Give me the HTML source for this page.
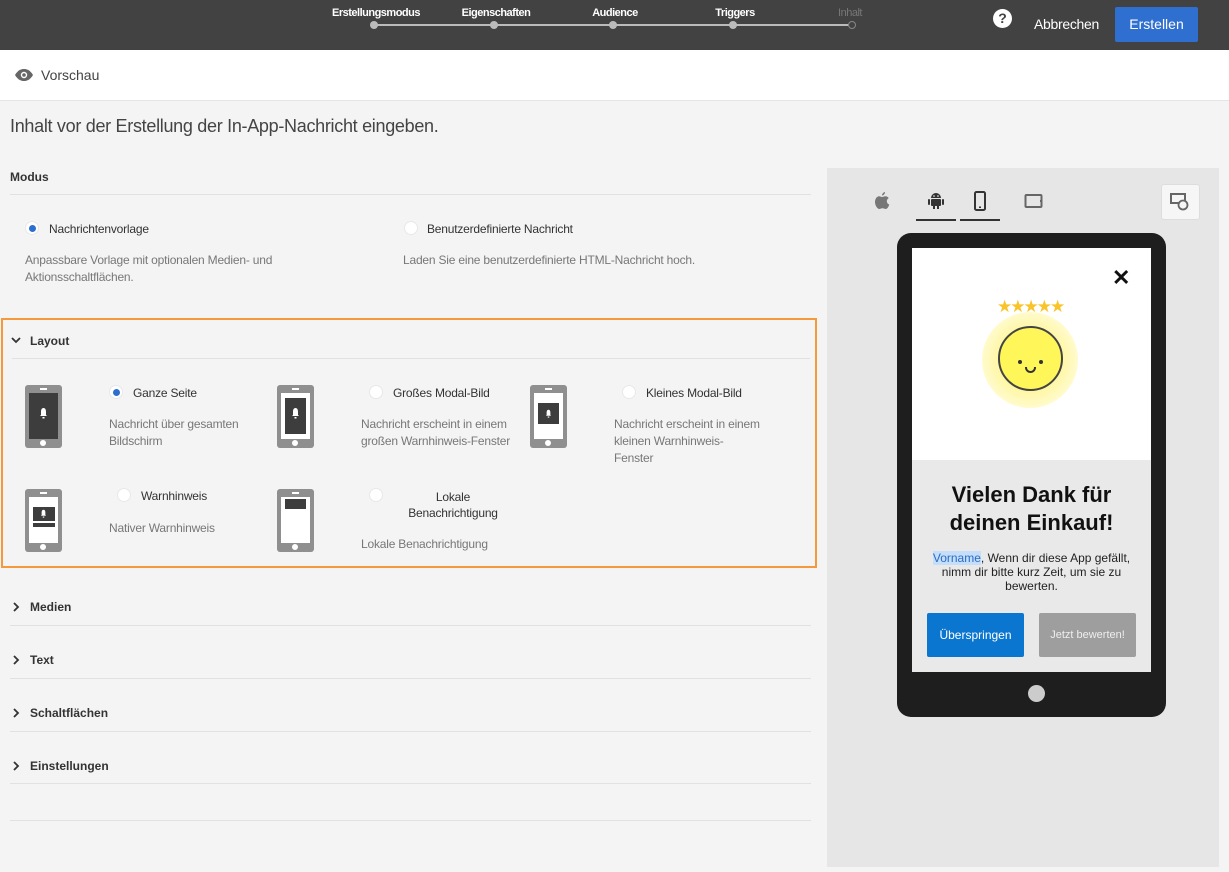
<!DOCTYPE html>
<html><head><meta charset="utf-8"><style>
*{box-sizing:border-box;margin:0;padding:0}
body{width:1229px;height:872px;background:#f4f4f4;font-family:"Liberation Sans",sans-serif;position:relative;overflow:hidden;color:#333}
.a{position:absolute}
.top{left:0;top:0;width:1229px;height:50px;background:#424242}
.step{color:#fff;font-size:11px;font-weight:bold;top:7px;transform:translateX(-50%);white-space:nowrap;letter-spacing:-0.5px}
.dot{width:8px;height:8px;border-radius:50%;background:#bbb;top:21px}
.hline{top:24px;height:2px;background:#bbb}
.sec{font-size:12px;font-weight:bold;color:#333}
.line{height:1px;background:#e1e1e1;left:10px;width:801px}
.radio{width:14px;height:14px;border-radius:50%;background:#fff;border:1px solid #e8e8e8}
.radio.on::after{content:"";position:absolute;left:3px;top:3px;width:7px;height:7px;border-radius:50%;background:#2d6fcd}
.lbl{font-size:12px;color:#333;letter-spacing:-0.2px}
.desc{font-size:12px;color:#777;line-height:17px;letter-spacing:-0.2px}
.ph{width:37px;height:63px;background:#8f8f8f;border-radius:3px}
.ph .scr{position:absolute;left:4px;top:8px;width:29px;height:46px;background:#fff}
.ph .btn{position:absolute;left:15px;bottom:2px;width:6px;height:6px;border-radius:50%;background:#fff}
.ph .sp{position:absolute;left:15px;top:3px;width:7px;height:2px;background:#fff}
.dk{position:absolute;background:#3d3d3d}
.bell{position:absolute}
</style></head><body>
<div class="a top"></div>
<div class="a hline" style="left:374px;width:478px"></div>
<div class="a step" style="left:376px">Erstellungsmodus</div>
<div class="a step" style="left:496px">Eigenschaften</div>
<div class="a step" style="left:615px">Audience</div>
<div class="a step" style="left:735px">Triggers</div>
<div class="a step" style="left:850px;color:#777;font-weight:normal">Inhalt</div>
<div class="a dot" style="left:370px"></div><div class="a dot" style="left:490px"></div><div class="a dot" style="left:609px"></div><div class="a dot" style="left:729px"></div>
<div class="a dot" style="left:848px;background:#424242;border:1px solid #888"></div>
<div class="a" style="left:993px;top:9px;width:19px;height:19px;border-radius:50%;background:#fff;color:#424242;font-size:14px;font-weight:bold;text-align:center;line-height:19px">?</div>
<div class="a" style="left:1034px;top:16px;color:#fff;font-size:14px;letter-spacing:-0.3px">Abbrechen</div>
<div class="a" style="left:1115px;top:7px;width:83px;height:35px;background:#2f6fcf;border-radius:2px;color:#fff;font-size:14px;text-align:center;line-height:35px">Erstellen</div>

<div class="a" style="left:0;top:50px;width:1229px;height:51px;background:#fff;border-bottom:1px solid #e4e4e4"></div>
<svg class="a" style="left:14px;top:68px" width="20" height="14" viewBox="0 0 20 14"><path d="M1 7C4 2 7 1 10 1s6 1 9 6c-3 5-6 6-9 6S4 12 1 7z" fill="#666"/><circle cx="10" cy="7" r="3.2" fill="#fff"/><circle cx="10" cy="7" r="1.8" fill="#666"/></svg>
<div class="a" style="left:41px;top:67px;font-size:14px;color:#444">Vorschau</div>

<div class="a" style="left:10px;top:116px;font-size:18px;color:#444;letter-spacing:-0.3px">Inhalt vor der Erstellung der In-App-Nachricht eingeben.</div>
<div class="a sec" style="left:10px;top:170px">Modus</div>
<div class="a line" style="top:194px"></div>
<div class="a radio on" style="left:25px;top:221px"></div>
<div class="a lbl" style="left:49px;top:222px">Nachrichtenvorlage</div>
<div class="a desc" style="left:25px;top:252px">Anpassbare Vorlage mit optionalen Medien- und<br>Aktionsschaltflächen.</div>
<div class="a radio" style="left:404px;top:221px"></div>
<div class="a lbl" style="left:427px;top:222px">Benutzerdefinierte Nachricht</div>
<div class="a desc" style="left:403px;top:252px">Laden Sie eine benutzerdefinierte HTML-Nachricht hoch.</div>

<div class="a" style="left:1px;top:318px;width:816px;height:250px;border:2px solid #f59a3c"></div>
<svg class="a" style="left:11px;top:336px" width="10" height="8" viewBox="0 0 10 8"><path d="M1 2l4 4 4-4" fill="none" stroke="#333" stroke-width="1.8"/></svg>
<div class="a sec" style="left:30px;top:334px">Layout</div>
<div class="a line" style="top:358px;left:12px;width:798px"></div>

<!-- phones -->
<div class="a ph" style="left:25px;top:385px"><div class="sp"></div><div class="scr" style="background:#3d3d3d"></div><svg class="bell" style="left:14px;top:22px" width="9" height="12" viewBox="0 0 9 12"><path d="M4.5 1C2.5 1 2 3 2 5v3L1 9h7L7 8V5c0-2-.5-4-2.5-4z" fill="#fff"/><rect x="3.5" y="10" width="2" height="1.5" fill="#fff"/></svg><div class="btn"></div></div>
<div class="a ph" style="left:277px;top:385px"><div class="sp"></div><div class="scr"></div><div class="dk" style="left:8px;top:13px;width:21px;height:36px"></div><svg class="bell" style="left:14px;top:22px" width="9" height="12" viewBox="0 0 9 12"><path d="M4.5 1C2.5 1 2 3 2 5v3L1 9h7L7 8V5c0-2-.5-4-2.5-4z" fill="#fff"/><rect x="3.5" y="10" width="2" height="1.5" fill="#fff"/></svg><div class="btn"></div></div>
<div class="a ph" style="left:530px;top:385px"><div class="sp"></div><div class="scr"></div><div class="dk" style="left:8px;top:18px;width:21px;height:21px"></div><svg class="bell" style="left:15px;top:24px" width="7" height="9" viewBox="0 0 9 12"><path d="M4.5 1C2.5 1 2 3 2 5v3L1 9h7L7 8V5c0-2-.5-4-2.5-4z" fill="#fff"/><rect x="3.5" y="10" width="2" height="1.5" fill="#fff"/></svg><div class="btn"></div></div>
<div class="a ph" style="left:25px;top:489px"><div class="sp"></div><div class="scr"></div><div class="dk" style="left:8px;top:18px;width:22px;height:14px"></div><div class="dk" style="left:8px;top:34px;width:22px;height:4px"></div><svg class="bell" style="left:15px;top:20px" width="7" height="9" viewBox="0 0 9 12"><path d="M4.5 1C2.5 1 2 3 2 5v3L1 9h7L7 8V5c0-2-.5-4-2.5-4z" fill="#fff"/><rect x="3.5" y="10" width="2" height="1.5" fill="#fff"/></svg><div class="btn"></div></div>
<div class="a ph" style="left:277px;top:489px"><div class="sp"></div><div class="scr"></div><div class="dk" style="left:8px;top:10px;width:21px;height:10px"></div><div class="btn"></div></div>

<div class="a radio on" style="left:109px;top:385px"></div><div class="a lbl" style="left:133px;top:386px">Ganze Seite</div>
<div class="a desc" style="left:109px;top:416px">Nachricht über gesamten<br>Bildschirm</div>
<div class="a radio" style="left:369px;top:385px"></div><div class="a lbl" style="left:393px;top:386px">Großes Modal-Bild</div>
<div class="a desc" style="left:361px;top:416px">Nachricht erscheint in einem<br>großen Warnhinweis-Fenster</div>
<div class="a radio" style="left:622px;top:385px"></div><div class="a lbl" style="left:646px;top:386px">Kleines Modal-Bild</div>
<div class="a desc" style="left:614px;top:416px">Nachricht erscheint in einem<br>kleinen Warnhinweis-<br>Fenster</div>
<div class="a radio" style="left:117px;top:488px"></div><div class="a lbl" style="left:141px;top:489px">Warnhinweis</div>
<div class="a desc" style="left:109px;top:520px">Nativer Warnhinweis</div>
<div class="a radio" style="left:369px;top:488px"></div><div class="a lbl" style="left:393px;top:489px;text-align:center;width:120px;line-height:16px">Lokale<br>Benachrichtigung</div>
<div class="a desc" style="left:361px;top:536px">Lokale Benachrichtigung</div>

<svg class="a" style="left:12px;top:602px" width="8" height="10" viewBox="0 0 8 10"><path d="M2 1l4 4-4 4" fill="none" stroke="#333" stroke-width="1.8"/></svg><div class="a sec" style="left:30px;top:600px">Medien</div><div class="a line" style="top:625px"></div>
<svg class="a" style="left:12px;top:655px" width="8" height="10" viewBox="0 0 8 10"><path d="M2 1l4 4-4 4" fill="none" stroke="#333" stroke-width="1.8"/></svg><div class="a sec" style="left:30px;top:653px">Text</div><div class="a line" style="top:678px"></div>
<svg class="a" style="left:12px;top:708px" width="8" height="10" viewBox="0 0 8 10"><path d="M2 1l4 4-4 4" fill="none" stroke="#333" stroke-width="1.8"/></svg><div class="a sec" style="left:30px;top:706px">Schaltflächen</div><div class="a line" style="top:731px"></div>
<svg class="a" style="left:12px;top:761px" width="8" height="10" viewBox="0 0 8 10"><path d="M2 1l4 4-4 4" fill="none" stroke="#333" stroke-width="1.8"/></svg><div class="a sec" style="left:30px;top:759px">Einstellungen</div><div class="a line" style="top:783px"></div>
<div class="a line" style="top:820px"></div>

<!-- preview -->
<div class="a" style="left:827px;top:168px;width:392px;height:699px;background:#e6e6e6"></div>
<svg class="a" style="left:874px;top:192px" width="16" height="18" viewBox="0 0 16 18"><path d="M11 0c0 2-1.5 3.5-3 3.5C8 1.8 9.5.2 11 0zM8 5c1.2 0 2-.7 3.5-.7 1.2 0 2.5.7 3.2 1.8-2.8 1.5-2.3 5.5.6 6.5-.7 2-2 4.4-3.6 4.4-1.3 0-1.6-.8-3.2-.8s-2 .8-3.2.8C3.5 17 1 13.5 1 10 1 6.8 3 4.3 5 4.3 6.3 4.3 7 5 8 5z" fill="#777"/></svg>
<svg class="a" style="left:927px;top:192px" width="18" height="18" viewBox="0 0 18 18"><path d="M4 6a5 5 0 0 1 10 0z" fill="#333"/><rect x="4" y="7" width="10" height="7" rx="1" fill="#333"/><rect x="1" y="7" width="2" height="6" rx="1" fill="#333"/><rect x="15" y="7" width="2" height="6" rx="1" fill="#333"/><rect x="6" y="13" width="2" height="4" fill="#333"/><rect x="10" y="13" width="2" height="4" fill="#333"/><circle cx="7" cy="4" r=".8" fill="#fff"/><circle cx="11" cy="4" r=".8" fill="#fff"/></svg>
<div class="a" style="left:916px;top:219px;width:40px;height:2px;background:#333"></div>
<svg class="a" style="left:973px;top:191px" width="14" height="20" viewBox="0 0 14 20"><rect x="2" y="1" width="10" height="18" rx="1.5" fill="none" stroke="#333" stroke-width="2"/><rect x="6" y="15.5" width="2" height="1.5" fill="#333"/></svg>
<div class="a" style="left:960px;top:219px;width:40px;height:2px;background:#333"></div>
<svg class="a" style="left:1024px;top:193px" width="20" height="16" viewBox="0 0 20 16"><rect x="1.5" y="2" width="16" height="12" rx="1" fill="none" stroke="#666" stroke-width="2"/><rect x="16" y="7" width="2" height="2" fill="#666"/></svg>
<div class="a" style="left:1161px;top:184px;width:39px;height:36px;background:#f6f6f6;border:1px solid #ddd;border-radius:3px"></div>
<svg class="a" style="left:1170px;top:192px" width="22" height="22" viewBox="0 0 22 22"><rect x="1" y="2" width="14" height="9" fill="none" stroke="#666" stroke-width="2"/><circle cx="13" cy="13" r="4.5" fill="#f6f6f6" stroke="#666" stroke-width="1.8"/></svg>

<div class="a" style="left:897px;top:233px;width:269px;height:484px;background:#1e1e1e;border-radius:14px"></div>
<div class="a" style="left:912px;top:248px;width:239px;height:424px;background:#e9e9e9"></div>
<div class="a" style="left:912px;top:248px;width:239px;height:212px;background:#fff"></div>
<div class="a" style="left:1112px;top:265px;font-size:22px;font-weight:bold;color:#111">✕</div>
<div class="a" style="left:997px;top:297px;color:#f8c42a;font-size:17px;letter-spacing:-2px">★★★★★</div>
<div class="a" style="left:982px;top:312px;width:96px;height:96px;border-radius:50%;background:radial-gradient(circle,#fff59a 40%,#fffbcc 70%,#fff 100%)"></div>
<div class="a" style="left:998px;top:326px;width:65px;height:65px;border-radius:50%;background:#fff75a;border:2px solid #444"></div>
<div class="a" style="left:1018px;top:360px;width:4px;height:4px;border-radius:50%;background:#333"></div>
<div class="a" style="left:1039px;top:360px;width:4px;height:4px;border-radius:50%;background:#333"></div>
<div class="a" style="left:1025px;top:367px;width:11px;height:6px;border:2px solid #333;border-top:none;border-radius:0 0 6px 6px"></div>
<div class="a" style="left:912px;top:481px;width:239px;text-align:center;font-size:22px;font-weight:bold;color:#111;line-height:28px">Vielen Dank für<br>deinen Einkauf!</div>
<div class="a" style="left:912px;top:551px;width:239px;text-align:center;font-size:12px;color:#222;line-height:14px"><span style="background:#c5defa;color:#2a6cc4">Vorname</span>, Wenn dir diese App gefällt,<br>nimm dir bitte kurz Zeit, um sie zu<br>bewerten.</div>
<div class="a" style="left:927px;top:613px;width:97px;height:44px;background:#0b76d0;border-radius:2px;color:#fff;font-size:12px;text-align:center;line-height:44px">Überspringen</div>
<div class="a" style="left:1039px;top:613px;width:97px;height:44px;background:#9e9e9e;border-radius:2px;color:#eee;font-size:11px;text-align:center;line-height:44px">Jetzt bewerten!</div>
<div class="a" style="left:1028px;top:685px;width:17px;height:17px;border-radius:50%;background:#ccc"></div>
</body></html>
